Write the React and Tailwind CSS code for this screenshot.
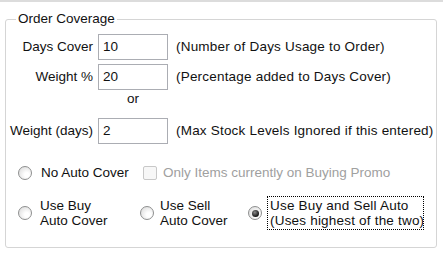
const Radio = ({ checked }) => (
  <span className="flex h-[14px] w-[14px] shrink-0 items-center justify-center rounded-full border border-[#8e8f8f] bg-[radial-gradient(circle_at_65%_65%,#ffffff_20%,#d6d6d6)]">
    {checked && (
      <span className="h-[7px] w-[7px] rounded-full bg-[radial-gradient(circle_at_40%_35%,#8a8a8a,#151515_70%)]" />
    )}
  </span>
);

const FieldRow = ({ label, value, note, className = "" }) => (
  <div className={`flex items-center ${className}`}>
    <span className="w-[87px] text-right whitespace-nowrap">{label}</span>
    <div className="ml-[5px] flex h-[26px] w-[70px] items-center border border-[#abadb3] bg-white px-[4px]">
      {value}
    </div>
    <span className="ml-[8px] whitespace-nowrap tracking-[0.2px]">{note}</span>
  </div>
);

export default function App() {
  return (
    <div className="h-[259px] w-[443px] overflow-hidden border-t-2 border-[#dcdcdc] bg-white pt-[9px] font-['Liberation_Sans',Arial,sans-serif] text-[13.5px] leading-[16px] text-[#111]">
      <fieldset className="ml-[5px] w-[432px] rounded-[3px] border border-[#d5d5d5] pb-[17px]">
        <legend className="ml-[10px] px-[2px] leading-[16px]">Order Coverage</legend>

        {/* Coverage inputs */}
        <FieldRow className="mt-[7px]" label="Days Cover" value="10" note="(Number of Days Usage to Order)" />
        <FieldRow className="mt-[4px]" label="Weight %" value="20" note="(Percentage added to Days Cover)" />
        <div className="mt-[1px] flex">
          <span className="ml-[92px] w-[70px] text-center">or</span>
        </div>
        <FieldRow className="mt-[11px]" label="Weight (days)" value="2" note="(Max Stock Levels Ignored if this entered)" />

        {/* Auto cover options */}
        <div className="mt-[21px] flex h-[16px] items-center pl-[12px]">
          <div className="flex w-[125px] items-center">
            <Radio />
            <span className="ml-[9px] whitespace-nowrap">No Auto Cover</span>
          </div>
          <span className="h-[14px] w-[14px] shrink-0 rounded-[2px] border border-[#c8c8c8] bg-[#f7f7f7]" />
          <span className="ml-[6px] whitespace-nowrap text-[#a0a0a0]">Only Items currently on Buying Promo</span>
        </div>

        <div className="mt-[15px] flex items-center pl-[12px] leading-[15px]">
          <div className="flex w-[122px] items-center">
            <Radio />
            <span className="ml-[8px]">
              Use Buy
              <br />
              Auto Cover
            </span>
          </div>
          <div className="flex w-[108px] items-center">
            <Radio />
            <span className="ml-[6px]">
              Use Sell
              <br />
              Auto Cover
            </span>
          </div>
          <div className="flex items-center">
            <Radio checked />
            <span className="ml-[5px] w-[157px] overflow-hidden whitespace-nowrap border border-dotted border-black py-[1px] pl-[2px] tracking-[0.2px]">
              Use Buy and Sell Auto
              <br />
              (Uses highest of the two)
            </span>
          </div>
        </div>
      </fieldset>
    </div>
  );
}
